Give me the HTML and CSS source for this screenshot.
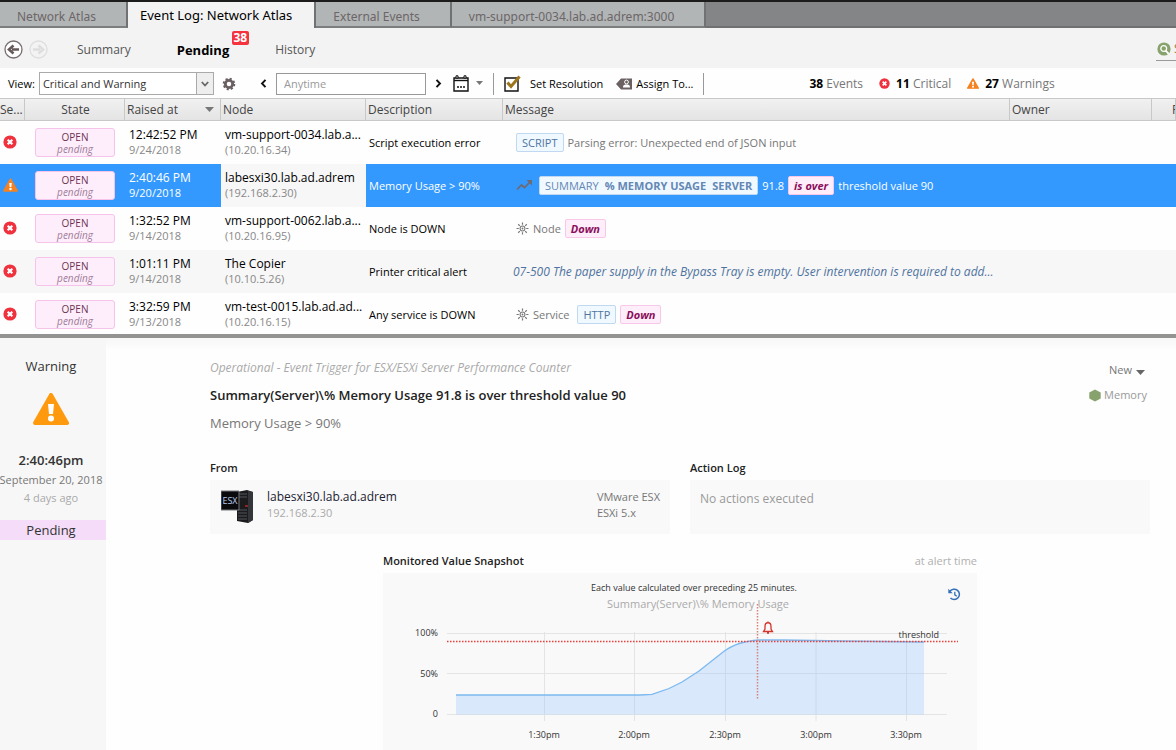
FILE: index.html
```
<!DOCTYPE html>
<html lang="en">
<head>
    <meta charset="UTF-8">
    <meta name="viewport" content="width=device-width, initial-scale=1.0">
    <title>Event Log: Network Atlas</title>
    <link rel="stylesheet" href="styles.css">
</head>
<body>
    <!-- shared icons -->
    <svg class="sprite" aria-hidden="true">
        <symbol id="i-critical" viewBox="0 0 14 14">
            <circle cx="7" cy="7" r="6.6" fill="#f0323f"/>
            <path d="M4.7 4.7l4.6 4.6M9.3 4.7l-4.6 4.6" stroke="#fff" stroke-width="2.2"/>
        </symbol>
        <symbol id="i-warning" viewBox="0 0 36 32">
            <path d="M18 2L34 30H2z" fill="currentColor" stroke="currentColor" stroke-width="4" stroke-linejoin="round"/>
            <path d="M15 11h6l-1 10h-4z" fill="#fff"/>
            <circle cx="18" cy="25.5" r="3" fill="#fff"/>
        </symbol>
        <symbol id="i-gear" viewBox="0 0 16 16">
            <circle cx="8" cy="8" r="4.2" fill="none" stroke="#6b6061" stroke-width="3.2"/>
            <circle cx="8" cy="8" r="6" fill="none" stroke="#6b6061" stroke-width="2.4" stroke-dasharray="2.4 2.312"/>
        </symbol>
        <symbol id="i-sun" viewBox="0 0 14 14">
            <circle cx="7" cy="7" r="2.6" fill="none" stroke="#777" stroke-width="1.1"/>
            <circle cx="7" cy="7" r="1" fill="#777"/>
            <path d="M7 .6v2.4M7 11v2.4M.6 7H3M11 7h2.4M2.4 2.4l1.7 1.7M9.9 9.9l1.7 1.7M2.4 11.6l1.7-1.7M9.9 4.1l1.7-1.7" stroke="#777" stroke-width="1.3"/>
        </symbol>
    </svg>

    <nav class="tabs">
        <a class="tab" href="#">Network Atlas</a>
        <a class="tab active" href="#">Event Log: Network Atlas</a>
        <a class="tab" href="#">External Events</a>
        <a class="tab" href="#">vm-support-0034.lab.ad.adrem:3000</a>
    </nav>

    <header class="subnav">
        <button class="nav-btn" aria-label="Back">
            <svg width="19" height="19" viewBox="0 0 19 19"><circle cx="9.500" cy="9.500" r="8.500" fill="#fff" stroke="#776d6e" stroke-width="1.300"/><path d="M15 9.500H8M9.500 5.500L5 9.500l4.500 4" fill="none" stroke="#66595a" stroke-width="2.600"/></svg>
        </button>
        <button class="nav-btn" aria-label="Forward" disabled>
            <svg width="19" height="19" viewBox="0 0 19 19"><circle cx="9.500" cy="9.500" r="8.500" fill="none" stroke="#dedede" stroke-width="1.300"/><path d="M4 9.500h7M9.500 5.500l4.500 4-4.500 4" fill="none" stroke="#dedede" stroke-width="2.600"/></svg>
        </button>
        <a class="view-link view-summary" href="#">Summary</a>
        <a class="view-link current" href="#">Pending<span class="badge">38</span></a>
        <a class="view-link" href="#">History</a>
        <div class="search">
            <svg width="14" height="14" viewBox="0 0 14 14"><circle cx="7" cy="7" r="6.600" fill="#87a26c"/><circle cx="6.700" cy="6.500" r="2.900" fill="none" stroke="#fff" stroke-width="1.300"/><path d="M8.700 8.600l3 3.200" stroke="#fff" stroke-width="1.800"/></svg>
            <input type="text" placeholder="Search" aria-label="Search">
        </div>
    </header>

    <div class="toolbar">
        <label for="view">View:</label>
        <div class="select">
            <select id="view">
                <option>Critical and Warning</option>
            </select>
            <svg class="select-arrow" width="8" height="6" viewBox="0 0 8 6"><path d="M.8 1L4 4.500 7.200 1" fill="none" stroke="#666" stroke-width="1.800"/></svg>
        </div>
        <button class="tool-gear" aria-label="View options"><svg width="14" height="14"><use href="#i-gear"/></svg></button>
        <button class="tool-prev" aria-label="Previous"><svg width="7" height="9" viewBox="0 0 7 9"><path d="M5.500 .8L2 4.500l3.500 3.700" fill="none" stroke="#111" stroke-width="1.900"/></svg></button>
        <input class="range" type="text" placeholder="Anytime" aria-label="Time range">
        <button aria-label="Next"><svg width="7" height="9" viewBox="0 0 7 9"><path d="M1.500 .8L5 4.500 1.500 8.200" fill="none" stroke="#111" stroke-width="1.900"/></svg></button>
        <button class="tool-calendar" aria-label="Calendar">
            <svg width="16" height="17" viewBox="0 0 16 17"><path d="M1 3h14v13H1z" fill="#fff" stroke="#111" stroke-width="1.400"/><path d="M1 5.500h14" stroke="#111" stroke-width="1.400"/><path d="M3 .8h2v2.400H3zM11 .8h2v2.400h-2z" fill="#fff" stroke="#111"/><path d="M4 12h2M7 12h2M10 12h2" stroke="#111" stroke-width="1.400"/></svg>
            <svg width="7" height="5" viewBox="0 0 7 5"><path d="M0 0h7L3.500 4z" fill="#777"/></svg>
        </button>
        <span class="divider"></span>
        <button class="tool-resolution">
            <svg width="17" height="17" viewBox="0 0 17 17"><path d="M1 3h13v13H1z" fill="#fff" stroke="#111" stroke-width="1.400"/><path d="M3.500 7.500L7 11.500 15.500 1.500" fill="none" stroke="#9c741c" stroke-width="3"/></svg>
            Set Resolution
        </button>
        <button class="tool-assign">
            <svg width="16" height="12" viewBox="0 0 16 12"><path d="M5 .5h11v11H5L0 6z" fill="#6b6162"/><circle cx="10.500" cy="4" r="1.900" fill="none" stroke="#fff"/><path d="M7 9.500c0-3 2-3 3.500-3s3.500 0 3.500 3z" fill="#fff"/></svg>
            Assign To...
        </button>
        <span class="divider"></span>
        <div class="counts">
            <span><b>38</b> Events</span>
            <span><svg width="11" height="11"><use href="#i-critical"/></svg><b>11</b> Critical</span>
            <span><svg class="warn" width="12" height="11"><use href="#i-warning"/></svg><b>27</b> Warnings</span>
        </div>
    </div>

    <table class="events">
        <colgroup>
            <col class="c-severity"><col class="c-state"><col class="c-raised"><col class="c-node"><col class="c-desc"><col><col class="c-owner"><col class="c-last">
        </colgroup>
        <thead>
            <tr>
                <th class="severity">Se...</th>
                <th class="state">State</th>
                <th><span class="sorted">Raised at <svg width="9" height="5" viewBox="0 0 9 5"><path d="M0 0h9L4.500 5z" fill="#777"/></svg></span></th>
                <th>Node</th>
                <th>Description</th>
                <th>Message</th>
                <th>Owner</th>
                <th class="last">P</th>
            </tr>
        </thead>
        <tbody>
            <tr>
                <td class="severity"><svg width="14" height="14"><use href="#i-critical"/></svg></td>
                <td class="state"><div class="state-box">OPEN<i>pending</i></div></td>
                <td class="raised">12:42:52 PM<small>9/24/2018</small></td>
                <td class="node">vm-support-0034.lab.a...<small>(10.20.16.34)</small></td>
                <td class="desc">Script execution error</td>
                <td class="msg"><div class="message"><span class="tag">SCRIPT</span> Parsing error: Unexpected end of JSON input</div></td>
                <td></td><td></td>
            </tr>
            <tr class="selected">
                <td class="severity"><svg class="warn" width="15" height="14"><use href="#i-warning"/></svg></td>
                <td class="state"><div class="state-box">OPEN<i>pending</i></div></td>
                <td class="raised">2:40:46 PM<small>9/20/2018</small></td>
                <td class="node">labesxi30.lab.ad.adrem<small>(192.168.2.30)</small></td>
                <td class="desc">Memory Usage &gt; 90%</td>
                <td class="msg"><div class="message">
                    <svg class="trend" width="16" height="11" viewBox="0 0 16 11"><path d="M1 9.500L5.500 5l3 2.500L14 2" fill="none" stroke="#6e6a70" stroke-width="1.700"/><path d="M10.500 0H16v5.500z" fill="#6e6a70"/></svg>
                    <span class="tag counter"><span>SUMMARY</span><b>% MEMORY USAGE</b><b>SERVER</b></span>
                    91.8 <span class="tag bad">is over</span> threshold value 90
                </div></td>
                <td></td><td></td>
            </tr>
            <tr>
                <td class="severity"><svg width="14" height="14"><use href="#i-critical"/></svg></td>
                <td class="state"><div class="state-box">OPEN<i>pending</i></div></td>
                <td class="raised">1:32:52 PM<small>9/14/2018</small></td>
                <td class="node">vm-support-0062.lab.a...<small>(10.20.16.95)</small></td>
                <td class="desc">Node is DOWN</td>
                <td class="msg"><div class="message"><svg width="13" height="13"><use href="#i-sun"/></svg> Node <span class="tag bad">Down</span></div></td>
                <td></td><td></td>
            </tr>
            <tr>
                <td class="severity"><svg width="14" height="14"><use href="#i-critical"/></svg></td>
                <td class="state"><div class="state-box">OPEN<i>pending</i></div></td>
                <td class="raised">1:01:11 PM<small>9/14/2018</small></td>
                <td class="node">The Copier<small>(10.10.5.26)</small></td>
                <td class="desc">Printer critical alert</td>
                <td class="msg trap">07-500 The paper supply in the Bypass Tray is empty. User intervention is required to add...</td>
                <td></td><td></td>
            </tr>
            <tr>
                <td class="severity"><svg width="14" height="14"><use href="#i-critical"/></svg></td>
                <td class="state"><div class="state-box">OPEN<i>pending</i></div></td>
                <td class="raised">3:32:59 PM<small>9/13/2018</small></td>
                <td class="node">vm-test-0015.lab.ad.ad...<small>(10.20.16.15)</small></td>
                <td class="desc">Any service is DOWN</td>
                <td class="msg"><div class="message"><svg width="13" height="13"><use href="#i-sun"/></svg> Service <span class="tag service">HTTP</span><span class="tag bad">Down</span></div></td>
                <td></td><td></td>
            </tr>
        </tbody>
    </table>

    <section class="detail">
        <aside class="side">
            <div class="side-title">Warning</div>
            <svg class="side-icon" width="36" height="32"><use href="#i-warning"/></svg>
            <div class="side-time">2:40:46pm</div>
            <div class="side-date">September 20, 2018</div>
            <div class="side-ago">4 days ago</div>
            <div class="side-state">Pending</div>
        </aside>

        <main class="content">
            <div class="summary">
                <div>
                    <p class="source">Operational - Event Trigger for ESX/ESXi Server Performance Counter</p>
                    <h1>Summary(Server)\% Memory Usage 91.8 is over threshold value 90</h1>
                    <p class="rule">Memory Usage &gt; 90%</p>
                </div>
                <div class="meta">
                    <button class="status">New <svg width="9" height="5" viewBox="0 0 9 5"><path d="M0 0h9L4.500 5z" fill="#666"/></svg></button>
                    <span class="category"><svg width="12" height="13" viewBox="0 0 12 13"><path d="M6 .5l5.700 3v6L6 12.500l-5.700-3v-6z" fill="#87a26c"/></svg>Memory</span>
                </div>
            </div>

            <div class="cards">
                <div>
                    <h2>From</h2>
                    <div class="card">
                        <svg class="server" width="33" height="33" viewBox="0 0 33 33">
                            <path d="M16 2l10-2 6 2v28l-5 3-11-2z" fill="#1b1b1e"/>
                            <path d="M27 1l5 1v28l-5 3z" fill="#34353a"/>
                            <path d="M17 4h9M17 7h9M17 20h9M17 23h9M17 26h9M17 29h9" stroke="#55565c"/>
                            <path d="M24 16h3" stroke="#b52a2a" stroke-width="1.500"/>
                            <path d="M0 1h18v19H0z" fill="#0a0a0c" stroke="#77787c"/>
                            <text x="9" y="14" text-anchor="middle">ESX</text>
                        </svg>
                        <div class="host"><a href="#">labesxi30.lab.ad.adrem</a><span>192.168.2.30</span></div>
                        <div class="platform">VMware ESX<br>ESXi 5.x</div>
                    </div>
                </div>
                <div>
                    <h2>Action Log</h2>
                    <div class="card no-actions">No actions executed</div>
                </div>
            </div>

            <div class="snapshot">
                <div class="snapshot-head"><h2>Monitored Value Snapshot</h2><span>at alert time</span></div>
                <div class="chart">
                    <svg viewBox="0 0 594 177" role="img" aria-label="Memory usage chart">
                        <path class="grid" d="M64 60.500h500M64 100.500h500M64 141.500h500M161.500 59v89M251.500 59v89M342.500 59v89M433 59v89M523.500 59v89"/>
                        <path class="area" d="M73 141.500V122H257L269 121.300 286 115.500 299 109 316 98 342 77.500Q352 71 362 69T375 67H400L460 68 541 69V141.500z"/>
                        <path class="line" d="M73 122H257L269 121.300 286 115.500 299 109 316 98 342 77.500Q352 71 362 69T375 67H400L460 68 541 69"/>
                        <path class="threshold" d="M64 68.500H575"/>
                        <path class="threshold alert" d="M374.500 31v95"/>
                        <path d="M380.500 58.500h9l-1.500-2.500v-2.500c0-5-6-5-6 0V56zM385 49.500v-1M384 60h2" fill="none" stroke="#d3342c" stroke-width="1.300"/>
                        <text x="311" y="18" class="mid">Each value calculated over preceding 25 minutes.</text>
                        <text x="315" y="35" class="mid series">Summary(Server)\% Memory Usage</text>
                        <text x="55" y="63" class="end">100%</text>
                        <text x="55" y="104" class="end">50%</text>
                        <text x="55" y="144" class="end">0</text>
                        <text x="556" y="65" class="end">threshold</text>
                        <text x="161" y="165" class="mid">1:30pm</text>
                        <text x="251" y="165" class="mid">2:00pm</text>
                        <text x="342" y="165" class="mid">2:30pm</text>
                        <text x="433" y="165" class="mid">3:00pm</text>
                        <text x="523" y="165" class="mid">3:30pm</text>
                    </svg>
                    <button class="history" aria-label="History">
                        <svg width="13" height="13" viewBox="0 0 13 13"><path d="M2 3.300A5.200 5.200 0 1 1 2.500 10" fill="none" stroke="#3470b8" stroke-width="1.500"/><path d="M.3 .8v4.400h4.400z" fill="#3470b8"/><path d="M6.800 3.800v3l2 1.500" fill="none" stroke="#3470b8" stroke-width="1.300"/></svg>
                    </button>
                </div>
            </div>
        </main>
    </section>
</body>
</html>
```

FILE: styles.css
```
* {
    box-sizing: border-box;
}

body {
    margin: 0;
    min-height: 100vh;
    display: flex;
    flex-direction: column;
    overflow: hidden;
    font-family: 'Open Sans', 'Noto Sans', sans-serif;
    font-size: 12px;
    line-height: 16px;
    color: #222;
    background: #fefefe;
}

button, input, select {
    font: inherit;
    color: inherit;
}

button {
    display: flex;
    align-items: center;
    padding: 0;
    border: none;
    background: none;
    cursor: pointer;
}

a {
    color: inherit;
    text-decoration: none;
}

h1, h2, p {
    margin: 0;
}

svg {
    flex: none;
}

.sprite {
    display: none;
}

.warn {
    color: #f58220;
}

/* window tabs */
.tabs {
    display: flex;
    height: 28px;
    border-top: 2px solid #1c1c1c;
    background: #848586;
    box-shadow: inset 0 -2px #6f7071;
}

.tab {
    padding: 6px 30px 0 17px;
    border-right: 2px solid #6f7172;
    border-bottom: 2px solid #7b7d7e;
    font-family: 'Noto Sans', sans-serif;
    background: #b1b5b6;
    color: #6d6567;
    line-height: 18px;
    white-space: nowrap;
}

.tab.active {
    padding: 4px 22px 0 12px;
    border-bottom: none;
    background: #f3f3f3;
    color: #000;
    font-size: 13px;
}

/* view switcher */
.subnav {
    display: flex;
    align-items: center;
    height: 40px;
    padding-left: 4px;
    padding-top: 3px;
    overflow: hidden;
    background: #f3f3f3;
}

.nav-btn {
    margin-right: 6px;
}

.view-link {
    position: relative;
    margin-right: 46px;
    font-size: 12px;
    color: #555;
}

.view-summary {
    margin-left: 23px;
}

.view-link.current {
    font-size: 13px;
    font-weight: bold;
    color: #000;
}

.badge {
    position: absolute;
    top: -11px;
    right: -20px;
    padding: 0 2px;
    border-radius: 2px;
    background: #f4333f;
    color: #fff;
    font-size: 12px;
    line-height: 14px;
}

.search {
    display: flex;
    align-items: center;
    gap: 3px;
    flex: none;
    width: 180px;
    height: 22px;
    margin-left: auto;
    margin-right: -160px;
    padding-left: 1px;
    border-bottom: 1px solid #999;
}

.search input {
    width: 150px;
    padding: 0;
    border: none;
    background: none;
}

.search input::placeholder {
    color: #a5764a;
}

/* toolbar */
.toolbar {
    display: flex;
    align-items: center;
    height: 30px;
    padding: 1px 0 0 8px;
    color: #000;
    font-size: 11px;
    white-space: nowrap;
}

.select {
    position: relative;
    width: 175px;
    margin-left: 4px;
}

.select select {
    appearance: none;
    display: block;
    width: 100%;
    height: 23px;
    padding: 0 20px 0 3px;
    border: 1px solid #aaa;
    border-radius: 0;
    background: linear-gradient(to right, #aaa 1px, #eee 1px) right / 17px 100% no-repeat #fff;
    color: #333;
}

.select-arrow {
    position: absolute;
    right: 5px;
    top: 9px;
    pointer-events: none;
}

.tool-gear {
    margin-left: 8px;
}

.tool-prev {
    margin-left: 24px;
}

.range {
    width: 150px;
    height: 22px;
    margin: 0 9px;
    padding: 0 7px;
    border: 1px solid #999;
}

.range::placeholder {
    color: #999;
}

.tool-calendar {
    gap: 7px;
    margin-left: 11px;
}

.divider {
    width: 1px;
    height: 22px;
    margin-left: 10px;
    background: #999;
}

.tool-resolution {
    gap: 9px;
    margin-left: 10px;
}

.tool-assign {
    gap: 4px;
    margin-left: 13px;
}

.counts {
    display: flex;
    gap: 16px;
    margin-left: 105px;
    color: #777;
    font-size: 12px;
}

.counts b {
    color: #000;
}

.counts svg {
    margin-right: 6px;
    vertical-align: -1px;
}

/* event list */
.events {
    width: 100%;
    table-layout: fixed;
    border-collapse: separate;
    border-spacing: 0;
    color: #000;
}

.c-severity { width: 25px; }
.c-state { width: 100px; }
.c-raised { width: 96px; }
.c-node { width: 145px; }
.c-desc { width: 137px; }
.c-owner { width: 142px; }
.c-last { width: 24px; }

.events th {
    height: 23px;
    padding: 0 0 0 2px;
    border: 1px solid #c8c8c8;
    border-left: none;
    background: linear-gradient(#f1f1f1, #e4e4e4);
    color: #444;
    font-weight: normal;
    text-align: left;
    white-space: nowrap;
    overflow: hidden;
}

.events th.severity {
    padding: 0;
}

.events th.state {
    text-align: center;
}

.events th.last {
    padding-left: 20px;
}

.sorted {
    display: flex;
    align-items: center;
    justify-content: space-between;
    padding-right: 6px;
}

.events td {
    height: 43px;
    padding: 0 0 2px 4px;
    white-space: nowrap;
    overflow: hidden;
}

.events tr:last-child td {
    height: 41px;
    padding-bottom: 0;
}

.events tbody tr:nth-child(even) {
    background: #f7f7f7;
}

.events td.severity {
    padding-left: 3px;
}

.severity svg {
    display: block;
}

.events td.state {
    padding-top: 2px;
    padding-left: 10px;
    padding-right: 10px;
}

.state-box {
    height: 29px;
    padding-top: 2px;
    border: 1px solid #f6c3ea;
    border-radius: 3px;
    background: #feeefc;
    color: #6b3350;
    font-size: 10px;
    line-height: 12px;
    text-align: center;
}

.state-box i {
    display: block;
    color: #a07c98;
}

.events small {
    display: block;
    color: #888;
    font-size: 11px;
    line-height: 14px;
}

.events td.desc, .events td.msg {
    padding-top: 2px;
}

.events td.desc {
    padding-left: 3px;
    font-size: 11px;
}

.events td.msg {
    padding-left: 13px;
    color: #777;
}

.events td.trap {
    padding-left: 10px;
    color: #4f73a0;
    font-style: italic;
}

.message {
    display: flex;
    align-items: center;
    gap: 4px;
    font-size: 11px;
}

.trend {
    margin-right: 3px;
}

.tag {
    padding: 0 5px;
    border: 1px solid #c1d9f0;
    border-radius: 2px;
    background: #f0f9ff;
    color: #4f759f;
    font-size: 11px;
    line-height: 17px;
}

.tag.bad {
    border-color: #f9c8e8;
    background: #feeefa;
    color: #8b0f5c;
    font-weight: bold;
    font-style: italic;
}

.service {
    margin-left: 4px;
}

.counter {
    display: flex;
    gap: 6px;
    padding: 0 5px;
    color: #6487b4;
}

.events tbody tr.selected {
    background: #3399ff;
}

.selected .raised, .selected .raised small, .selected .desc, .selected .message {
    color: #fff;
}

.selected .node {
    background: #f7f7f7;
}

/* event details */
.detail {
    display: flex;
    flex: 1;
    border-top: 4px solid #939492;
    background: linear-gradient(#f7f7f7, #fefefe 12px);
}

.side {
    flex: none;
    width: 106px;
    display: flex;
    flex-direction: column;
    align-items: center;
    padding: 20px 4px 0 0;
    background: #f7f7f7;
    color: #333;
    white-space: nowrap;
}

.side-title {
    font-size: 13px;
}

.side-icon {
    margin-top: 19px;
    color: #ff9a0f;
}

.side-time {
    margin-top: 27px;
    font-size: 13px;
    font-weight: 600;
}

.side-date {
    margin-top: 4px;
    color: #777;
    font-size: 11px;
}

.side-ago {
    margin-top: 2px;
    color: #aaa;
    font-size: 11px;
}

.side-state {
    align-self: stretch;
    margin: 14px -4px 0 0;
    padding-right: 4px;
    background: #f5dcf8;
    font-size: 13px;
    line-height: 20px;
    text-align: center;
}

.content {
    flex: 1;
    padding: 22px 26px 0 104px;
}

.summary {
    display: flex;
    justify-content: space-between;
}

.source {
    color: #aaa;
    font-style: italic;
}

h1 {
    margin-top: 11px;
    font-size: 13px;
    font-weight: 600;
    line-height: 16px;
}

.rule {
    margin-top: 12px;
    color: #777;
    font-size: 13px;
}

.meta {
    display: flex;
    flex-direction: column;
    align-items: flex-end;
    gap: 9px;
    padding: 2px 3px 0 0;
    color: #999;
    font-size: 11px;
}

.status {
    gap: 4px;
    padding-right: 2px;
    color: #777;
}

.status svg {
    margin-top: 4px;
}

.category {
    display: flex;
    align-items: center;
    gap: 3px;
}

.cards {
    display: grid;
    grid-template-columns: 1fr 1fr;
    gap: 20px;
    margin-top: 29px;
}

h2 {
    font-size: 11px;
    font-weight: 600;
}

.card {
    display: flex;
    min-height: 54px;
    margin-top: 4px;
    padding: 9px 10px;
    background: #f9f9f9;
}

.no-actions {
    padding-top: 11px;
    color: #999;
}

.server {
    margin: 1px 13px 0 1px;
}

.server text {
    fill: #b9cdf0;
    font-size: 9px;
}

.host {
    flex: 1;
    color: #223;
}

.host span {
    display: block;
    color: #aaa;
    font-size: 11px;
}

.platform {
    color: #777;
    font-size: 11px;
}

.snapshot {
    max-width: 594px;
    margin: 19px auto 0;
}

.snapshot-head {
    display: flex;
    justify-content: space-between;
    color: #b0b0b0;
    font-size: 11px;
}

.snapshot-head h2 {
    color: #222;
}

.chart {
    position: relative;
    margin-top: 4px;
    background: #f9f9f9;
}

.chart > svg {
    display: block;
    width: 100%;
}

.chart text {
    fill: #333;
    font-size: 9px;
}

.chart .series {
    fill: #aaa;
    font-size: 11px;
}

.mid { text-anchor: middle; }
.end { text-anchor: end; }

.grid {
    fill: none;
    stroke: #e4e4e4;
}

.area {
    fill: #80bbff;
    fill-opacity: 0.26;
}

.line {
    fill: none;
    stroke: #7cb9f0;
    stroke-width: 1.3;
}

.threshold {
    fill: none;
    stroke: #e8403c;
    stroke-width: 1.5;
    stroke-dasharray: 1.5 1.5;
}

.alert {
    stroke: #d98078;
}

.history {
    position: absolute;
    top: 15px;
    right: 16px;
}
```
